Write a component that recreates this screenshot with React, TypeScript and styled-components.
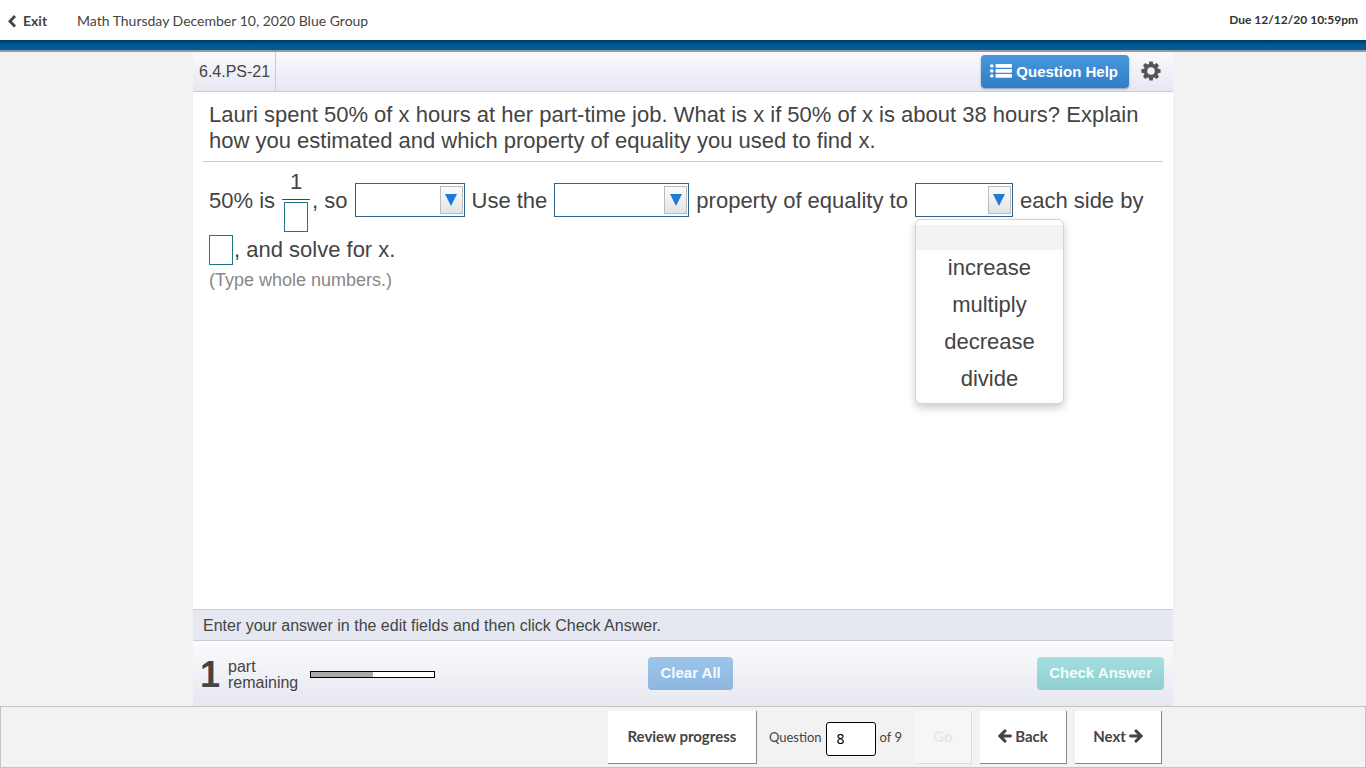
import React from "react";
import styled, { createGlobalStyle, css } from "styled-components";

const Global = createGlobalStyle`
  * { box-sizing: border-box; }
  body { margin: 0; background: #f2f2f2; color: #444; font-family: "Liberation Sans", Arial, sans-serif; }
  button, input, select { font-family: inherit; margin: 0; }
`;

const Page = styled.div`
  display: flex;
  flex-direction: column;
  min-height: 100vh;
`;

const TopBar = styled.header`
  display: flex;
  align-items: center;
  height: 40px;
  padding: 0 8px;
  background: #fff;
  font-family: Lato, sans-serif;
`;

const ExitLink = styled.a`
  display: flex;
  align-items: center;
  gap: 7px;
  width: 69px;
  padding-top: 2px;
  color: #444;
  font-size: 14px;
  font-weight: 700;
  line-height: 20px;
  text-decoration: none;
`;

const CourseTitle = styled.h1`
  flex: 1;
  margin: 0;
  padding-top: 2px;
  font-size: 14px;
  font-weight: 400;
  line-height: 20px;
`;

const DueDate = styled.span`
  color: #333;
  font-size: 12px;
  font-weight: 700;
  line-height: 20px;
`;

const BlueBand = styled.div`
  height: 12px;
  border-bottom: 2px solid #999;
  background: linear-gradient(#003a5d, #005a9c 50%, #005a9c);
`;

const Player = styled.main`
  display: flex;
  flex: 1;
  flex-direction: column;
  width: 100%;
  max-width: 980px;
  margin: 0 auto;
  background: #fff;
`;

const Toolbar = styled.div`
  display: flex;
  align-items: center;
  height: 40px;
  padding-right: 12px;
  border-bottom: 1px solid #c9ccd3;
  background: linear-gradient(#fafafd, #e6e7f1);
`;

const ExerciseId = styled.div`
  display: flex;
  align-items: center;
  align-self: stretch;
  margin-right: auto;
  padding: 0 5px 0 6px;
  border-right: 1px solid #c9ccd3;
  font-size: 16px;
`;

const ActionButton = styled.button<{ $from: string; $to: string; $raised?: boolean }>`
  display: flex;
  align-items: center;
  justify-content: center;
  gap: 4px;
  height: 33px;
  padding: 0 12px 2px;
  border: 0;
  border-radius: 4px;
  background: linear-gradient(${(p) => p.$from}, ${(p) => p.$to});
  color: #fff;
  font-size: 15px;
  font-weight: 700;
  ${(p) => p.$raised && css`padding: 0 11px 1px 9px; box-shadow: 0 1px 2px #8a9bb0;`}
  &:disabled { color: #f4fbff; }
`;

const GearButton = styled.button`
  display: flex;
  margin-left: 12px;
  padding: 0 0 2px;
  border: 0;
  background: none;
  color: #555;
`;

const Question = styled.section`
  flex: 1;
  padding: 10px 10px 0;
`;

const Prompt = styled.p`
  margin: 0;
  padding: 0 6px 7px;
  border-bottom: 1px solid #ccc;
  font-size: 22px;
  line-height: 26px;
`;

const Answer = styled.div`
  display: flex;
  flex-direction: column;
  gap: 3px;
  padding-top: 8px;
`;

const AnswerLine = styled.div<{ $gap: number }>`
  display: flex;
  align-items: center;
  gap: ${(p) => p.$gap}px;
  padding-left: 6px;
  font-size: 22px;
  line-height: 24px;
  white-space: nowrap;
`;

const Group = styled.span`
  display: flex;
  align-items: center;
  gap: 2px;
`;

const Fraction = styled.span`
  display: flex;
  flex-direction: column;
  align-items: center;
  gap: 2px;
`;

const Numerator = styled.span`
  width: 28px;
  padding-bottom: 5px;
  border-bottom: 1px solid #444;
  text-align: center;
`;

const NumberBox = styled.input`
  width: 24px;
  height: 30px;
  padding: 0 4px;
  border: 1px solid #1f7583;
  border-radius: 0;
  background: #fff;
  color: #444;
  font-size: 22px;
`;

const Picker = styled.div<{ $width: number }>`
  position: relative;
  display: flex;
  width: ${(p) => p.$width}px;
  height: 34px;
  margin-bottom: 2px;
  padding: 2px 1px 2px 0;
  border: 1px solid #31638f;
  background: #fff;
`;

const PickerSelect = styled.select`
  flex: 1;
  min-width: 0;
  padding: 0 4px;
  border: 0;
  appearance: none;
  background: #fff;
  color: #444;
  font-size: 22px;
`;

const PickerArrow = styled.span`
  display: flex;
  align-items: center;
  justify-content: center;
  width: 23px;
  border: 1px solid #bbb;
  background: linear-gradient(#fbfbfb, #e4e4e4);
`;

const Menu = styled.ul`
  position: absolute;
  top: 35px;
  left: -1px;
  width: 149px;
  margin: 0;
  padding: 5px 0;
  border: 1px solid #d4d4d4;
  border-radius: 6px;
  background: #fff;
  box-shadow: 0 4px 8px #0003;
  list-style: none;
`;

const MenuItem = styled.li<{ $blank?: boolean }>`
  height: ${(p) => (p.$blank ? 25 : 37)}px;
  background: ${(p) => (p.$blank ? "#f3f3f3" : "#fff")};
  line-height: 35px;
  text-align: center;
`;

const Hint = styled.p`
  margin: 5px 0 0;
  padding-left: 6px;
  color: #888;
  font-size: 18px;
  line-height: 20px;
`;

const Instruction = styled.div`
  height: 32px;
  padding: 0 10px;
  border-top: 1px solid #c9ccd3;
  border-bottom: 1px solid #c9ccd3;
  background: #e5e8f0;
  font-size: 16px;
  line-height: 31px;
`;

const ActionRow = styled.div`
  display: grid;
  grid-template-columns: 26fr auto 25fr;
  align-items: center;
  height: 65px;
  padding: 0 9px 0 7px;
  background: linear-gradient(#fbfbfd, #e6e7f0);
`;

const PartStatus = styled.div`
  display: flex;
  align-items: center;
  padding-top: 2px;
`;

const PartCount = styled.strong`
  width: 28px;
  font-size: 36px;
  line-height: 40px;
`;

const PartLabel = styled.span`
  width: 82px;
  font-size: 16px;
  line-height: 16px;
`;

const Track = styled.div`
  width: 125px;
  height: 7px;
  border: 1px solid #000;
  background: #fff;
`;

const Fill = styled.div`
  width: 50%;
  height: 100%;
  background: #aaa;
`;

const RightCell = styled.div`
  justify-self: end;
`;

const BottomBar = styled.footer`
  height: 62px;
  border: 1px solid #c4c4c4;
  font-family: Lato, sans-serif;
`;

const BottomInner = styled.nav`
  display: flex;
  align-items: center;
  justify-content: flex-end;
  max-width: 980px;
  height: 60px;
  margin: 0 auto;
  padding-right: 11px;
`;

const NavButton = styled.button<{ $width: number }>`
  display: flex;
  align-items: center;
  justify-content: center;
  gap: 3px;
  width: ${(p) => p.$width}px;
  height: 53px;
  margin-left: 8px;
  padding: 0 0 1px;
  border: solid #888;
  border-width: 0 1px 1px 0;
  background: #fff;
  color: #444;
  font-size: 15px;
  font-weight: 700;
  &:disabled { border-color: #ddd; background: #f6f6f6; color: #e6e6e6; }
`;

const JumpForm = styled.div`
  display: flex;
  align-items: center;
  gap: 4px;
  margin: 0 5px 0 12px;
  font-size: 13px;
`;

const JumpInput = styled.input`
  width: 50px;
  height: 34px;
  margin-top: 3px;
  padding: 0 10px;
  border: 1px solid #000;
  border-radius: 3px;
  background: #fff;
  color: #000;
  font-family: "Noto Sans", sans-serif;
  font-size: 14px;
`;

const ChevronIcon = () => (
  <svg width="8" height="13" viewBox="0 0 8 13" aria-hidden="true">
    <path d="M7 1 1.9 6.2 7 11.4" fill="none" stroke="#444" strokeWidth="2.8" />
  </svg>
);

const ListIcon = () => (
  <svg width="22" height="14" viewBox="0 0 22 14" fill="#fff" aria-hidden="true">
    {[0, 5, 10].map((y) => (
      <g key={y}>
        <rect x="0" y={y + 0.2} width="3.6" height="3.4" rx="1.6" />
        <rect x="5.5" y={y} width="16.5" height="3.8" rx="1" />
      </g>
    ))}
  </svg>
);

const GearIcon = () => (
  <svg width="20" height="20" viewBox="0 0 20 20" aria-hidden="true">
    <g fill="currentColor">
      {[0, 45, 90, 135].map((a) => (
        <path key={a} d="M7.6 4 8.3.4h3.4l.7 3.6v12l-.7 3.6H8.3L7.6 16z" transform={`rotate(${a} 10 10)`} />
      ))}
      <circle cx="10" cy="10" r="7.2" />
    </g>
    <circle cx="10" cy="10" r="3.8" fill="#f1f1f7" />
  </svg>
);

const ArrowIcon = ({ right }: { right?: boolean }) => (
  <svg width="14" height="14" viewBox="0 0 14 14" aria-hidden="true">
    <path
      d={right ? "M1.5 7H11M7 1.9 12.1 7 7 12.1" : "M12.5 7H3M7 1.9 1.9 7 7 12.1"}
      fill="none"
      stroke="#444"
      strokeWidth="2.9"
      strokeLinecap="round"
    />
  </svg>
);

function Dropdown({ label, width, options, open }: { label: string; width: number; options?: string[]; open?: boolean }) {
  return (
    <Picker $width={width}>
      <PickerSelect aria-label={label}>
        <option value="" />
        {options?.map((o) => <option key={o}>{o}</option>)}
      </PickerSelect>
      <PickerArrow>
        <svg width="12" height="12" viewBox="0 0 12 12" aria-hidden="true">
          <path d="M0 0h12L6 12z" fill="#1c7cd5" />
        </svg>
      </PickerArrow>
      {open && (
        <Menu role="listbox" aria-label={label}>
          <MenuItem role="option" aria-selected="true" $blank />
          {options?.map((o) => <MenuItem key={o} role="option" aria-selected="false">{o}</MenuItem>)}
        </Menu>
      )}
    </Picker>
  );
}

export default function App() {
  return (
    <Page>
      <Global />
      <TopBar>
        <ExitLink href="#exit"><ChevronIcon />Exit</ExitLink>
        <CourseTitle>Math Thursday December 10, 2020 Blue Group</CourseTitle>
        <DueDate>Due 12/12/20 10:59pm</DueDate>
      </TopBar>
      <BlueBand />
      <Player>
        <Toolbar>
          <ExerciseId>6.4.PS-21</ExerciseId>
          <ActionButton $from="#4a97dc" $to="#2f7dc6" $raised><ListIcon />Question Help</ActionButton>
          <GearButton aria-label="Settings"><GearIcon /></GearButton>
        </Toolbar>
        <Question>
          <Prompt>
            Lauri spent 50% of x hours at her part-time job. What is x if 50% of x is about 38 hours? Explain
            how you estimated and which property of equality you used to find x.
          </Prompt>
          <Answer>
            <AnswerLine $gap={7}>
              <span>50% is</span>
              <Group>
                <Fraction>
                  <Numerator>1</Numerator>
                  <NumberBox aria-label="Denominator" />
                </Fraction>
                <span>, so</span>
              </Group>
              <Dropdown label="Estimate" width={110} />
              <span>Use the</span>
              <Dropdown label="Property" width={135} />
              <span>property of equality to</span>
              <Dropdown label="Operation" width={98} options={["increase", "multiply", "decrease", "divide"]} open />
              <span>each side by</span>
            </AnswerLine>
            <AnswerLine $gap={1}>
              <NumberBox aria-label="Number applied to each side" />
              <span>, and solve for x.</span>
            </AnswerLine>
          </Answer>
          <Hint>(Type whole numbers.)</Hint>
        </Question>
        <Instruction>Enter your answer in the edit fields and then click Check Answer.</Instruction>
        <ActionRow>
          <PartStatus>
            <PartCount>1</PartCount>
            <PartLabel>part<br />remaining</PartLabel>
            <Track role="progressbar" aria-label="Parts completed" aria-valuenow={50}><Fill /></Track>
          </PartStatus>
          <ActionButton $from="#9dc5ea" $to="#8db7df" disabled>Clear All</ActionButton>
          <RightCell>
            <ActionButton $from="#a4dfe1" $to="#8fced0" disabled>Check Answer</ActionButton>
          </RightCell>
        </ActionRow>
      </Player>
      <BottomBar>
        <BottomInner>
          <NavButton $width={149}>Review progress</NavButton>
          <JumpForm>
            <label htmlFor="question-number">Question</label>
            <JumpInput id="question-number" defaultValue="8" />
            <span>of 9</span>
          </JumpForm>
          <NavButton $width={57} disabled>Go</NavButton>
          <NavButton $width={87}><ArrowIcon />Back</NavButton>
          <NavButton $width={87}>Next<ArrowIcon right /></NavButton>
        </BottomInner>
      </BottomBar>
    </Page>
  );
}
